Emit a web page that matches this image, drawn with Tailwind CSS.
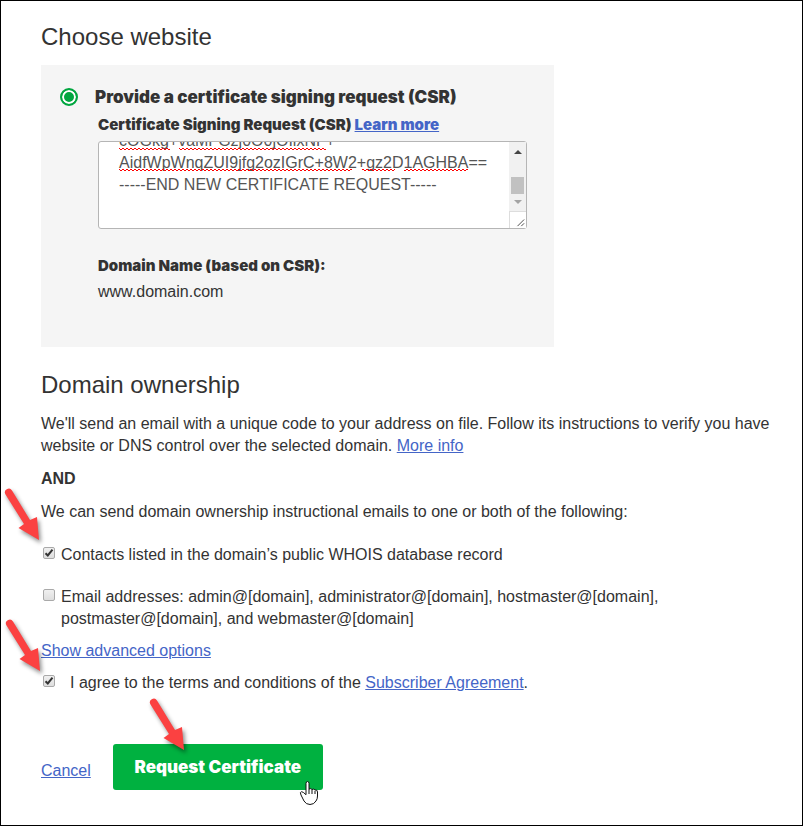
<!DOCTYPE html>
<html lang="en">
<head>
  <meta charset="UTF-8" />
  <meta name="viewport" content="width=device-width, initial-scale=1.0" />
  <title>Request Certificate</title>
  <script src="https://cdn.jsdelivr.net/npm/@tailwindcss/browser@4"></script>
</head>
<body class="bg-white text-[#333] font-['Liberation_Sans',Arial,sans-serif] text-base leading-[22px]">
<main class="relative min-h-screen border border-black pl-10 pr-7 pt-5 pb-8">

  <!-- Choose website -->
  <h1 class="text-2xl leading-8 mb-3">Choose website</h1>

  <section class="bg-[#f5f5f5] max-w-[513px] pl-[19px] pr-[27px] pt-5 pb-11">
    <div class="flex items-center gap-[17px]">
      <input id="csrOption" type="radio" name="website" checked class="appearance-none w-[18px] h-[18px] rounded-full border-2 border-[#00a63f] bg-[#00a63f] shadow-[inset_0_0_0_2px_#fff]" />
      <label for="csrOption" class="font-['Inter',sans-serif] font-black text-[17px] leading-6">Provide a certificate signing request (CSR)</label>
    </div>

    <div class="pl-[38px] pt-[5px]">
      <div class="font-['Inter',sans-serif] font-black text-[15px] leading-[22px]">
        <label for="csr">Certificate Signing Request (CSR)</label>
        <a href="#" class="text-[#4465c7] underline">Learn more</a>
      </div>

      <!-- CSR text box -->
      <div class="relative mt-[5px] h-[88px]">
        <textarea id="csr" spellcheck="false" class="block w-full h-full resize-none overflow-hidden whitespace-pre rounded-[3px] border border-[#b5b5b5] bg-white px-5 pt-3 pb-2.5 text-[#555] leading-[22px] outline-none">-----BEGIN NEW CERTIFICATE REQUEST-----
cOGkg+vaMFGzj0O0jOIixNF+
AidfWpWnqZUI9jfg2ozIGrC+8W2+gz2D1AGHBA==
-----END NEW CERTIFICATE REQUEST-----
</textarea>

        <!-- Spelling marks -->
        <svg class="absolute left-5 top-0 w-[370px] h-8 pointer-events-none" fill="none">
          <defs>
            <pattern id="wave" width="4" height="3" patternUnits="userSpaceOnUse">
              <path d="M-1 3 L1 1 L3 3 L5 1" stroke="#f00" fill="none" />
            </pattern>
          </defs>
          <path d="M1 6h51v3h-51zM61 6h147v3h-147zM1 27h233v3h-233zM244 27h33v3h-33zM286 27h64v3h-64z" fill="url(#wave)" />
        </svg>

        <!-- Scrollbar -->
        <div class="absolute top-px right-px bottom-px w-[17px] flex flex-col items-center bg-[#f1f1f1] pointer-events-none">
          <svg class="w-[17px] h-[35px]" viewBox="0 0 17 35"><path d="M5 12h8L9 8z" fill="#444" /></svg>
          <div class="w-[13px] h-[17px] bg-[#c1c1c1]"></div>
          <svg class="w-[17px] h-[17px]" viewBox="0 0 17 17"><path d="M5 6h8L9 10z" fill="#a3a3a3" /></svg>
          <svg class="w-[17px] h-[17px] bg-white border-t border-l border-[#ddd]" viewBox="0 0 17 17"><path d="M8 15l7-7M12 15l3-3" stroke="#444" /></svg>
        </div>
      </div>

      <p class="font-['Inter',sans-serif] font-black text-[15px] leading-[22px] mt-[26px]">Domain Name (based on CSR):</p>
      <p class="mt-1">www.domain.com</p>
    </div>
  </section>

  <!-- Domain ownership -->
  <h2 class="text-2xl leading-8 mt-[22px] mb-3">Domain ownership</h2>
  <p class="max-w-[740px]">We'll send an email with a unique code to your address on file. Follow its instructions to verify you have website or DNS control over the selected domain. <a href="#" class="text-[#4465c7] underline">More info</a></p>
  <p class="font-bold mt-[11px]">AND</p>
  <p class="mt-[11px]">We can send domain ownership instructional emails to one or both of the following:</p>

  <div class="flex gap-1.5 mt-[21px] pl-0.5">
    <span class="relative w-3 h-3 mt-[3px] shrink-0">
      <input id="whois" type="checkbox" checked class="peer block appearance-none w-3 h-3 rounded-[2px] border border-[#a9a9a9] bg-linear-to-b from-[#f0f0f0] to-[#dedede]" />
      <svg class="absolute inset-0 w-3 h-3 hidden peer-checked:block pointer-events-none" viewBox="0 0 12 12" fill="none" stroke="#333" stroke-width="2"><path d="M2.5 6.2l2.3 2.3L9.5 2.7" /></svg>
    </span>
    <label for="whois">Contacts listed in the domain’s public WHOIS database record</label>
  </div>
  <div class="flex gap-1.5 mt-5 pl-0.5">
    <input id="emails" type="checkbox" class="appearance-none w-3 h-3 mt-[3px] shrink-0 rounded-[2px] border border-[#a9a9a9] bg-linear-to-b from-[#f0f0f0] to-[#dedede]" />
    <label for="emails" class="max-w-[620px]">Email addresses: admin@[domain], administrator@[domain], hostmaster@[domain], postmaster@[domain], and webmaster@[domain]</label>
  </div>
  <a href="#" class="inline-block mt-2.5 text-[#4465c7] underline">Show advanced options</a>

  <div class="flex gap-[15px] mt-2.5 pl-0.5">
    <span class="relative w-3 h-3 mt-[3px] shrink-0">
      <input id="agree" type="checkbox" checked class="peer block appearance-none w-3 h-3 rounded-[2px] border border-[#a9a9a9] bg-linear-to-b from-[#f0f0f0] to-[#dedede]" />
      <svg class="absolute inset-0 w-3 h-3 hidden peer-checked:block pointer-events-none" viewBox="0 0 12 12" fill="none" stroke="#333" stroke-width="2"><path d="M2.5 6.2l2.3 2.3L9.5 2.7" /></svg>
    </span>
    <label for="agree">I agree to the terms and conditions of the <a href="#" class="text-[#4465c7] underline">Subscriber Agreement</a>.</label>
  </div>

  <!-- Actions -->
  <div class="flex items-center gap-[22px] mt-[50px]">
    <a href="#" class="text-[#4465c7] underline mt-2">Cancel</a>
    <button class="bg-[#00b140] text-white font-['Inter',sans-serif] font-black text-[17px] leading-[22px] min-w-[210px] px-5 py-3 rounded-[3px]">Request Certificate</button>
  </div>

  <!-- Arrows and pointer -->
  <svg class="absolute -left-px -top-px w-[803px] h-[826px] pointer-events-none" viewBox="0 0 803 826">
    <defs>
      <path id="arrow" d="M-33.5 -45.5A3.8 3.8 0 0 1 -27 -49.5L-9 -20L-2 -23L0 0L-20.5 -12L-15 -16Z" fill="#fb4141" />
    </defs>
    <g class="drop-shadow-[2px_3px_2px_rgba(0,0,0,0.45)]">
      <use href="#arrow" x="39" y="540" />
      <use href="#arrow" x="40" y="671" />
      <use href="#arrow" x="184" y="750" />
    </g>
    <path d="M306 783.500q0-2 1.500-2t1.500 2v5.500q2-1 3 .5q2-1 3 .5q2.500-.5 2.500 2v4q0 3-1.500 5q-2 3.500-6 3.500t-6-3.500l-3-6q-1.500-3 .5-3.300q1.500 0 4.500 3z" fill="#fff" stroke="#111" stroke-linejoin="round" />
    <path d="M309 789v5M312 790v4M315 791v3" stroke="#111" />
  </svg>
</main>

<script>
const csr = document.getElementById('csr');
csr.scrollTop = csr.scrollHeight;
</script>
</body>
</html>
